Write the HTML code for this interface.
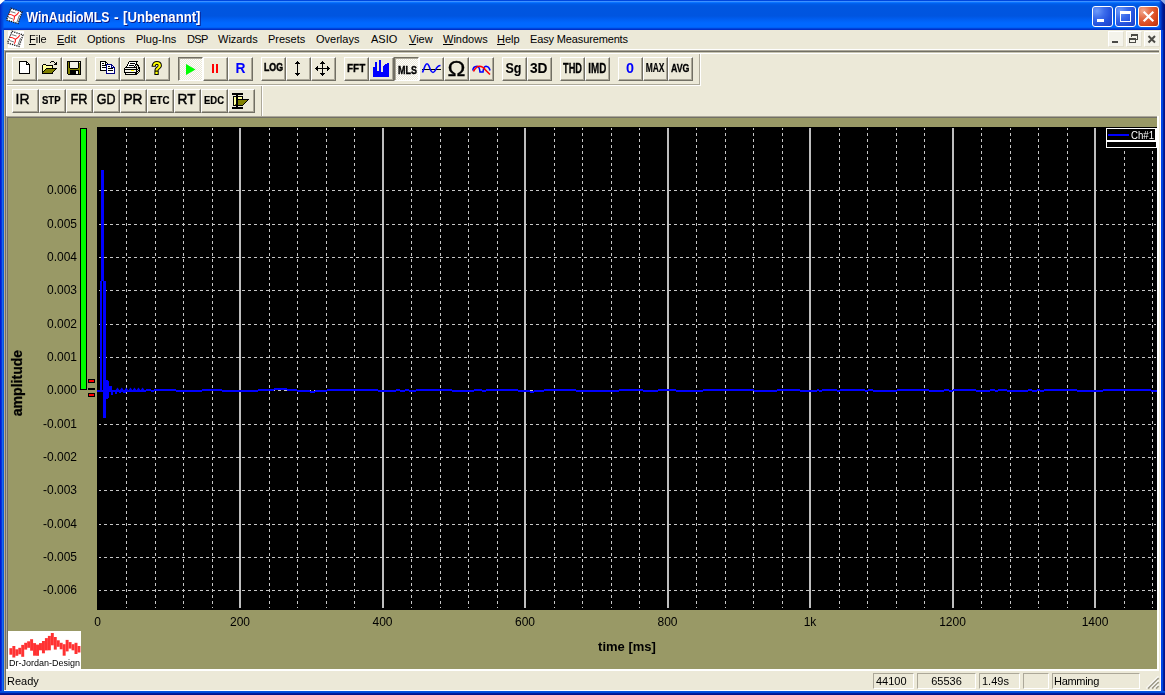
<!DOCTYPE html><html><head><meta charset="utf-8"><title>WinAudioMLS - [Unbenannt]</title><style>
html,body{margin:0;padding:0;}
body{width:1165px;height:695px;overflow:hidden;background:#ECE9D8;position:relative;font-family:"Liberation Sans",sans-serif;font-size:11px;color:#000;}
svg text{font-family:"Liberation Sans",sans-serif;}
.gl{will-change:transform;}
.abs{position:absolute;}
#title{left:0;top:0;width:1165px;height:30px;background:linear-gradient(to bottom,#0046DD 0px,#0046DD 1px,#3C90FF 1px,#3C90FF 2px,#0A72FF 2px,#0A72FF 3px,#0066F4 3px,#005CE8 4px,#0056E0 6px,#0055E0 16px,#0060F4 20px,#0068FF 23px,#0068FF 27px,#0058EC 28px,#0030C8 29px,#0030C8 30px);}
#bl{left:0;top:30px;width:4px;height:665px;background:linear-gradient(to right,#0019CF 0,#0019CF 1px,#0831D9 1px,#0831D9 2px,#166AEE 2px,#166AEE 3px,#0855DD 3px,#0855DD 4px);}
#br{left:1161px;top:30px;width:4px;height:665px;background:linear-gradient(to right,#0044EE 0,#0044EE 1px,#0048D8 1px,#0048D8 2px,#001DA0 2px,#001DA0 3px,#00138C 3px,#00138C 4px);}
#bb{left:0;top:691px;width:1165px;height:4px;background:linear-gradient(to bottom,#0855DD 0,#0855DD 1px,#0048D8 1px,#0048D8 2px,#001DA0 2px,#001DA0 3px,#00138C 3px,#00138C 4px);}
.menu{top:32px;height:14px;line-height:14px;font-size:11px;white-space:nowrap;}
.menu u{text-decoration:underline;}
.hl{position:absolute;height:1px;}
.vl{position:absolute;width:1px;}
.btn{position:absolute;box-sizing:border-box;border:1px solid;border-color:#fff #716F64 #716F64 #fff;background:#ECE9D8;box-shadow:inset -1px -1px 0 #ACA899;}
.btn.dn{border-color:#716F64 #fff #fff #716F64;background:repeating-conic-gradient(#fff 0 25%,#ECE9D8 0 50%) 0 0/2px 2px;box-shadow:inset 1px 1px 0 #ACA899;}
.cb{position:absolute;top:6px;width:21px;height:21px;box-sizing:border-box;border:1px solid #fff;border-radius:3px;}
.cb.b{background:radial-gradient(circle at 4px 4px,#6E9BFA 0,#3C6CEB 35%,#2452DE 65%,#1C3FC4 100%);}
.cb.r{background:radial-gradient(circle at 4px 4px,#F2A98E 0,#E36A44 35%,#DA4A1F 65%,#B52F0D 100%);}
.mb{position:absolute;top:31px;width:16px;height:16px;box-sizing:border-box;background:#F4F3EB;border:1px solid;border-color:#fff #E2DFD0 #E2DFD0 #fff;}
#mdi{left:8px;top:118px;width:1149px;height:551px;background:#999966;}
.pane{position:absolute;top:673px;height:16px;box-sizing:border-box;border:1px solid;border-color:#ACA899 #fff #fff #ACA899;line-height:14px;font-size:11px;white-space:nowrap;}
</style></head><body>
<div id="title" class="abs"></div>
<svg class="abs gl" style="left:0;top:0" width="400" height="30" viewBox="0 0 400 30"><text y="21.6" font-size="14" font-weight="bold" fill="#fff" style="text-shadow:1px 1px 0 #0A1883" xml:space="preserve"><tspan x="26.5" textLength="83" lengthAdjust="spacingAndGlyphs">WinAudioMLS</tspan><tspan x="110.2"> - </tspan><tspan x="123" textLength="77.5" lengthAdjust="spacingAndGlyphs">[Unbenannt]</tspan></text></svg>
<div id="bl" class="abs"></div><div id="br" class="abs"></div><div id="bb" class="abs"></div>
<div class="abs" style="left:0;top:0;width:4px;height:30px;background:linear-gradient(to right,#0024C0 0,#0038D0 1px,#0050E4 3px,rgba(0,80,228,0) 4px)"></div>
<div class="abs" style="left:1159px;top:0;width:6px;height:30px;background:linear-gradient(to right,rgba(0,64,208,0) 0,#0038C8 2px,#0028B0 3px,#001890 4px,#00107C 6px)"></div>
<svg class="abs" style="left:0;top:0" width="1165" height="8" viewBox="0 0 1165 8"><polygon points="0,0 5,0 0,4.5" fill="#fff"/><polygon points="1160.5,0 1165,0 1165,4.5" fill="#8FA8E6"/></svg>
<div class="cb b" style="left:1092px"></div><div class="cb b" style="left:1115px"></div><div class="cb r" style="left:1138px"></div>
<div class="mb" style="left:1108px"></div><div class="mb" style="left:1126px"></div><div class="mb" style="left:1144px"></div>
<div class="abs menu" style="left:29px"><u>F</u>ile</div>
<div class="abs menu" style="left:57px"><u>E</u>dit</div>
<div class="abs menu" style="left:87px">Options</div>
<div class="abs menu" style="left:136px">Plug-Ins</div>
<div class="abs menu" style="left:187px;letter-spacing:-0.6px">DSP</div>
<div class="abs menu" style="left:218px">Wizards</div>
<div class="abs menu" style="left:268px">Presets</div>
<div class="abs menu" style="left:316px">Overlays</div>
<div class="abs menu" style="left:371px">ASIO</div>
<div class="abs menu" style="left:409px"><u>V</u>iew</div>
<div class="abs menu" style="left:443px"><u>W</u>indows</div>
<div class="abs menu" style="left:497px"><u>H</u>elp</div>
<div class="abs menu" style="left:530px;letter-spacing:-0.14px">Easy Measurements</div>
<div class="hl" style="left:4px;top:49px;width:1155px;background:#fff"></div>
<div class="hl" style="left:4px;top:50px;width:1155px;background:#ACA899"></div>
<div class="hl" style="left:4px;top:51px;width:1155px;background:#716F64"></div>
<div class="hl" style="left:4px;top:52px;width:1155px;background:#C8C5B2"></div>
<div class="hl" style="left:4px;top:53px;width:1155px;background:#fff"></div>
<div class="vl" style="left:699px;top:54px;height:31px;background:#ACA899"></div>
<div class="vl" style="left:700px;top:54px;height:32px;background:#fff"></div>
<div class="hl" style="left:6px;top:84px;width:694px;background:#ACA899"></div>
<div class="hl" style="left:6px;top:85px;width:695px;background:#fff"></div>
<div class="vl" style="left:261px;top:86px;height:30px;background:#ACA899"></div>
<div class="vl" style="left:262px;top:86px;height:30px;background:#fff"></div>
<div class="btn" style="left:12px;top:57px;width:25px;height:24px"></div>
<div class="btn" style="left:37px;top:57px;width:25px;height:24px"></div>
<div class="btn" style="left:62px;top:57px;width:25px;height:24px"></div>
<div class="btn" style="left:95px;top:57px;width:25px;height:24px"></div>
<div class="btn" style="left:120px;top:57px;width:25px;height:24px"></div>
<div class="btn" style="left:145px;top:57px;width:25px;height:24px"></div>
<div class="btn dn" style="left:178px;top:57px;width:25px;height:24px"></div>
<div class="btn" style="left:203px;top:57px;width:25px;height:24px"></div>
<div class="btn" style="left:228px;top:57px;width:25px;height:24px"></div>
<div class="btn" style="left:261px;top:57px;width:25px;height:24px"></div>
<div class="btn" style="left:286px;top:57px;width:25px;height:24px"></div>
<div class="btn" style="left:311px;top:57px;width:25px;height:24px"></div>
<div class="btn" style="left:344px;top:57px;width:25px;height:24px"></div>
<div class="btn" style="left:369px;top:57px;width:25px;height:24px"></div>
<div class="btn dn" style="left:394px;top:57px;width:25px;height:24px"></div>
<div class="btn" style="left:419px;top:57px;width:25px;height:24px"></div>
<div class="btn" style="left:444px;top:57px;width:25px;height:24px"></div>
<div class="btn" style="left:469px;top:57px;width:25px;height:24px"></div>
<div class="btn" style="left:502px;top:57px;width:25px;height:24px"></div>
<div class="btn" style="left:527px;top:57px;width:25px;height:24px"></div>
<div class="btn" style="left:560px;top:57px;width:25px;height:24px"></div>
<div class="btn" style="left:585px;top:57px;width:25px;height:24px"></div>
<div class="btn" style="left:618px;top:57px;width:25px;height:24px"></div>
<div class="btn" style="left:643px;top:57px;width:25px;height:24px"></div>
<div class="btn" style="left:668px;top:57px;width:25px;height:24px"></div>
<div class="btn" style="left:12px;top:89px;width:27px;height:24px"></div>
<div class="btn" style="left:39px;top:89px;width:27px;height:24px"></div>
<div class="btn" style="left:66px;top:89px;width:27px;height:24px"></div>
<div class="btn" style="left:93px;top:89px;width:27px;height:24px"></div>
<div class="btn" style="left:120px;top:89px;width:27px;height:24px"></div>
<div class="btn" style="left:147px;top:89px;width:27px;height:24px"></div>
<div class="btn" style="left:174px;top:89px;width:27px;height:24px"></div>
<div class="btn" style="left:201px;top:89px;width:27px;height:24px"></div>
<div class="btn" style="left:228px;top:89px;width:27px;height:24px"></div>
<div class="hl" style="left:6px;top:116px;width:1151px;background:#ACA899"></div>
<div class="hl" style="left:7px;top:117px;width:1150px;background:#716F64"></div>
<div class="vl" style="left:4px;top:51px;height:639px;background:#B5AD94"></div>
<div class="vl" style="left:5px;top:52px;height:638px;background:#716F64"></div>
<div class="vl" style="left:6px;top:53px;height:63px;background:#fff"></div>
<div class="hl" style="left:4px;top:690px;width:1157px;background:#fff"></div>
<div class="vl" style="left:6px;top:116px;height:553px;background:#ACA899"></div>
<div class="vl" style="left:7px;top:117px;height:552px;background:#716F64"></div>
<div class="vl" style="left:1160px;top:30px;height:661px;background:#FBFAF4"></div>
<div id="mdi" class="abs"></div>
<div class="vl" style="left:1157px;top:116px;height:555px;background:#fff"></div>
<div class="vl" style="left:1158px;top:116px;height:555px;background:#fff"></div>
<div class="hl" style="left:6px;top:669px;width:1153px;background:#fff"></div>
<div class="hl" style="left:6px;top:670px;width:1153px;background:#fff"></div>
<div class="abs" style="left:97px;top:127px;width:1060px;height:483px;background:#000"></div>
<div class="abs" style="left:8px;top:631px;width:73px;height:38px;background:#fff"></div>
<svg class="abs gl" style="left:0;top:0" width="1165" height="695" viewBox="0 0 1165 695" shape-rendering="crispEdges"><line x1="126.5" y1="128" x2="126.5" y2="608" stroke="#C6C6C6" stroke-width="1" stroke-dasharray="3 3" stroke-dashoffset="1"/><line x1="155.5" y1="128" x2="155.5" y2="608" stroke="#C6C6C6" stroke-width="1" stroke-dasharray="3 3" stroke-dashoffset="1"/><line x1="183.5" y1="128" x2="183.5" y2="608" stroke="#C6C6C6" stroke-width="1" stroke-dasharray="3 3" stroke-dashoffset="1"/><line x1="212.5" y1="128" x2="212.5" y2="608" stroke="#C6C6C6" stroke-width="1" stroke-dasharray="3 3" stroke-dashoffset="1"/><rect x="239" y="128" width="2" height="480" fill="#BEBEBE"/><line x1="269.5" y1="128" x2="269.5" y2="608" stroke="#C6C6C6" stroke-width="1" stroke-dasharray="3 3" stroke-dashoffset="1"/><line x1="297.5" y1="128" x2="297.5" y2="608" stroke="#C6C6C6" stroke-width="1" stroke-dasharray="3 3" stroke-dashoffset="1"/><line x1="326.5" y1="128" x2="326.5" y2="608" stroke="#C6C6C6" stroke-width="1" stroke-dasharray="3 3" stroke-dashoffset="1"/><line x1="354.5" y1="128" x2="354.5" y2="608" stroke="#C6C6C6" stroke-width="1" stroke-dasharray="3 3" stroke-dashoffset="1"/><rect x="382" y="128" width="2" height="480" fill="#BEBEBE"/><line x1="411.5" y1="128" x2="411.5" y2="608" stroke="#C6C6C6" stroke-width="1" stroke-dasharray="3 3" stroke-dashoffset="1"/><line x1="440.5" y1="128" x2="440.5" y2="608" stroke="#C6C6C6" stroke-width="1" stroke-dasharray="3 3" stroke-dashoffset="1"/><line x1="468.5" y1="128" x2="468.5" y2="608" stroke="#C6C6C6" stroke-width="1" stroke-dasharray="3 3" stroke-dashoffset="1"/><line x1="497.5" y1="128" x2="497.5" y2="608" stroke="#C6C6C6" stroke-width="1" stroke-dasharray="3 3" stroke-dashoffset="1"/><rect x="524" y="128" width="2" height="480" fill="#BEBEBE"/><line x1="554.5" y1="128" x2="554.5" y2="608" stroke="#C6C6C6" stroke-width="1" stroke-dasharray="3 3" stroke-dashoffset="1"/><line x1="582.5" y1="128" x2="582.5" y2="608" stroke="#C6C6C6" stroke-width="1" stroke-dasharray="3 3" stroke-dashoffset="1"/><line x1="611.5" y1="128" x2="611.5" y2="608" stroke="#C6C6C6" stroke-width="1" stroke-dasharray="3 3" stroke-dashoffset="1"/><line x1="639.5" y1="128" x2="639.5" y2="608" stroke="#C6C6C6" stroke-width="1" stroke-dasharray="3 3" stroke-dashoffset="1"/><rect x="667" y="128" width="2" height="480" fill="#BEBEBE"/><line x1="696.5" y1="128" x2="696.5" y2="608" stroke="#C6C6C6" stroke-width="1" stroke-dasharray="3 3" stroke-dashoffset="1"/><line x1="725.5" y1="128" x2="725.5" y2="608" stroke="#C6C6C6" stroke-width="1" stroke-dasharray="3 3" stroke-dashoffset="1"/><line x1="753.5" y1="128" x2="753.5" y2="608" stroke="#C6C6C6" stroke-width="1" stroke-dasharray="3 3" stroke-dashoffset="1"/><line x1="782.5" y1="128" x2="782.5" y2="608" stroke="#C6C6C6" stroke-width="1" stroke-dasharray="3 3" stroke-dashoffset="1"/><rect x="809" y="128" width="2" height="480" fill="#BEBEBE"/><line x1="839.5" y1="128" x2="839.5" y2="608" stroke="#C6C6C6" stroke-width="1" stroke-dasharray="3 3" stroke-dashoffset="1"/><line x1="867.5" y1="128" x2="867.5" y2="608" stroke="#C6C6C6" stroke-width="1" stroke-dasharray="3 3" stroke-dashoffset="1"/><line x1="896.5" y1="128" x2="896.5" y2="608" stroke="#C6C6C6" stroke-width="1" stroke-dasharray="3 3" stroke-dashoffset="1"/><line x1="924.5" y1="128" x2="924.5" y2="608" stroke="#C6C6C6" stroke-width="1" stroke-dasharray="3 3" stroke-dashoffset="1"/><rect x="952" y="128" width="2" height="480" fill="#BEBEBE"/><line x1="981.5" y1="128" x2="981.5" y2="608" stroke="#C6C6C6" stroke-width="1" stroke-dasharray="3 3" stroke-dashoffset="1"/><line x1="1010.5" y1="128" x2="1010.5" y2="608" stroke="#C6C6C6" stroke-width="1" stroke-dasharray="3 3" stroke-dashoffset="1"/><line x1="1038.5" y1="128" x2="1038.5" y2="608" stroke="#C6C6C6" stroke-width="1" stroke-dasharray="3 3" stroke-dashoffset="1"/><line x1="1067.5" y1="128" x2="1067.5" y2="608" stroke="#C6C6C6" stroke-width="1" stroke-dasharray="3 3" stroke-dashoffset="1"/><rect x="1094" y="128" width="2" height="480" fill="#BEBEBE"/><line x1="1124.5" y1="128" x2="1124.5" y2="608" stroke="#C6C6C6" stroke-width="1" stroke-dasharray="3 3" stroke-dashoffset="1"/><line x1="1152.5" y1="128" x2="1152.5" y2="608" stroke="#C6C6C6" stroke-width="1" stroke-dasharray="3 3" stroke-dashoffset="1"/><line x1="99" y1="190.5" x2="1156" y2="190.5" stroke="#C6C6C6" stroke-width="1" stroke-dasharray="3 3" stroke-dashoffset="1"/><text x="77" y="194" text-anchor="end" font-size="12" fill="#000">0.006</text><line x1="99" y1="224.5" x2="1156" y2="224.5" stroke="#C6C6C6" stroke-width="1" stroke-dasharray="3 3" stroke-dashoffset="1"/><text x="77" y="228" text-anchor="end" font-size="12" fill="#000">0.005</text><line x1="99" y1="257.5" x2="1156" y2="257.5" stroke="#C6C6C6" stroke-width="1" stroke-dasharray="3 3" stroke-dashoffset="1"/><text x="77" y="261" text-anchor="end" font-size="12" fill="#000">0.004</text><line x1="99" y1="290.5" x2="1156" y2="290.5" stroke="#C6C6C6" stroke-width="1" stroke-dasharray="3 3" stroke-dashoffset="1"/><text x="77" y="294" text-anchor="end" font-size="12" fill="#000">0.003</text><line x1="99" y1="324.5" x2="1156" y2="324.5" stroke="#C6C6C6" stroke-width="1" stroke-dasharray="3 3" stroke-dashoffset="1"/><text x="77" y="328" text-anchor="end" font-size="12" fill="#000">0.002</text><line x1="99" y1="357.5" x2="1156" y2="357.5" stroke="#C6C6C6" stroke-width="1" stroke-dasharray="3 3" stroke-dashoffset="1"/><text x="77" y="361" text-anchor="end" font-size="12" fill="#000">0.001</text><line x1="99" y1="390.5" x2="1156" y2="390.5" stroke="#C6C6C6" stroke-width="1" stroke-dasharray="3 3" stroke-dashoffset="1"/><text x="77" y="394" text-anchor="end" font-size="12" fill="#000">0.000</text><line x1="99" y1="424.5" x2="1156" y2="424.5" stroke="#C6C6C6" stroke-width="1" stroke-dasharray="3 3" stroke-dashoffset="1"/><text x="77" y="428" text-anchor="end" font-size="12" fill="#000">-0.001</text><line x1="99" y1="457.5" x2="1156" y2="457.5" stroke="#C6C6C6" stroke-width="1" stroke-dasharray="3 3" stroke-dashoffset="1"/><text x="77" y="461" text-anchor="end" font-size="12" fill="#000">-0.002</text><line x1="99" y1="490.5" x2="1156" y2="490.5" stroke="#C6C6C6" stroke-width="1" stroke-dasharray="3 3" stroke-dashoffset="1"/><text x="77" y="494" text-anchor="end" font-size="12" fill="#000">-0.003</text><line x1="99" y1="524.5" x2="1156" y2="524.5" stroke="#C6C6C6" stroke-width="1" stroke-dasharray="3 3" stroke-dashoffset="1"/><text x="77" y="528" text-anchor="end" font-size="12" fill="#000">-0.004</text><line x1="99" y1="557.5" x2="1156" y2="557.5" stroke="#C6C6C6" stroke-width="1" stroke-dasharray="3 3" stroke-dashoffset="1"/><text x="77" y="561" text-anchor="end" font-size="12" fill="#000">-0.005</text><line x1="99" y1="590.5" x2="1156" y2="590.5" stroke="#C6C6C6" stroke-width="1" stroke-dasharray="3 3" stroke-dashoffset="1"/><text x="77" y="594" text-anchor="end" font-size="12" fill="#000">-0.006</text><text x="97.5" y="626" text-anchor="middle" font-size="12" fill="#000">0</text><text x="240.0" y="626" text-anchor="middle" font-size="12" fill="#000">200</text><text x="382.5" y="626" text-anchor="middle" font-size="12" fill="#000">400</text><text x="525.0" y="626" text-anchor="middle" font-size="12" fill="#000">600</text><text x="667.5" y="626" text-anchor="middle" font-size="12" fill="#000">800</text><text x="810.0" y="626" text-anchor="middle" font-size="12" fill="#000">1k</text><text x="952.5" y="626" text-anchor="middle" font-size="12" fill="#000">1200</text><text x="1095.0" y="626" text-anchor="middle" font-size="12" fill="#000">1400</text><text x="627" y="650.5" text-anchor="middle" font-size="13" font-weight="bold" fill="#000">time [ms]</text><text transform="translate(22.3 416.3) rotate(-90)" font-size="14" font-weight="bold" fill="#000" stroke="#000" stroke-width="0.25" textLength="66.5" lengthAdjust="spacingAndGlyphs">amplitude</text><rect x="80.5" y="128.5" width="6" height="261" fill="#00FF00" stroke="#000" stroke-width="1"/><rect x="88.5" y="379.5" width="6" height="3" fill="#FF0000" stroke="#000" stroke-width="1"/><rect x="88.5" y="393.5" width="6" height="3" fill="#FF0000" stroke="#000" stroke-width="1"/><rect x="88" y="388" width="7" height="2" fill="#000"/><rect x="97" y="390" width="49" height="2" fill="#0000FF"/><rect x="146" y="389" width="5" height="2" fill="#0000FF"/><rect x="151" y="390" width="3" height="2" fill="#0000FF"/><rect x="154" y="389" width="22" height="2" fill="#0000FF"/><rect x="176" y="390" width="26" height="2" fill="#0000FF"/><rect x="202" y="389" width="20" height="2" fill="#0000FF"/><rect x="222" y="390" width="36" height="2" fill="#0000FF"/><rect x="258" y="389" width="16" height="2" fill="#0000FF"/><rect x="274" y="388" width="13" height="2" fill="#0000FF"/><rect x="287" y="389" width="10" height="2" fill="#0000FF"/><rect x="297" y="390" width="13" height="2" fill="#0000FF"/><rect x="310" y="391" width="5" height="2" fill="#0000FF"/><rect x="315" y="390" width="12" height="2" fill="#0000FF"/><rect x="327" y="389" width="51" height="2" fill="#0000FF"/><rect x="378" y="390" width="18" height="2" fill="#0000FF"/><rect x="396" y="389" width="4" height="2" fill="#0000FF"/><rect x="400" y="390" width="5" height="2" fill="#0000FF"/><rect x="405" y="389" width="4" height="2" fill="#0000FF"/><rect x="409" y="390" width="7" height="2" fill="#0000FF"/><rect x="416" y="389" width="36" height="2" fill="#0000FF"/><rect x="452" y="390" width="22" height="2" fill="#0000FF"/><rect x="474" y="389" width="8" height="2" fill="#0000FF"/><rect x="482" y="390" width="4" height="2" fill="#0000FF"/><rect x="486" y="389" width="32" height="2" fill="#0000FF"/><rect x="518" y="390" width="12" height="2" fill="#0000FF"/><rect x="530" y="391" width="4" height="2" fill="#0000FF"/><rect x="534" y="390" width="10" height="2" fill="#0000FF"/><rect x="544" y="389" width="32" height="2" fill="#0000FF"/><rect x="576" y="390" width="43" height="2" fill="#0000FF"/><rect x="619" y="389" width="24" height="2" fill="#0000FF"/><rect x="643" y="390" width="15" height="2" fill="#0000FF"/><rect x="658" y="389" width="18" height="2" fill="#0000FF"/><rect x="676" y="390" width="27" height="2" fill="#0000FF"/><rect x="703" y="389" width="51" height="2" fill="#0000FF"/><rect x="754" y="390" width="23" height="2" fill="#0000FF"/><rect x="777" y="389" width="23" height="2" fill="#0000FF"/><rect x="800" y="390" width="17" height="2" fill="#0000FF"/><rect x="817" y="389" width="2" height="2" fill="#0000FF"/><rect x="819" y="390" width="3" height="2" fill="#0000FF"/><rect x="822" y="389" width="15" height="2" fill="#0000FF"/><rect x="837" y="390" width="3" height="2" fill="#0000FF"/><rect x="840" y="389" width="25" height="2" fill="#0000FF"/><rect x="865" y="390" width="3" height="2" fill="#0000FF"/><rect x="868" y="389" width="5" height="2" fill="#0000FF"/><rect x="873" y="390" width="24" height="2" fill="#0000FF"/><rect x="897" y="389" width="32" height="2" fill="#0000FF"/><rect x="929" y="390" width="15" height="2" fill="#0000FF"/><rect x="944" y="389" width="5" height="2" fill="#0000FF"/><rect x="949" y="390" width="4" height="2" fill="#0000FF"/><rect x="953" y="389" width="23" height="2" fill="#0000FF"/><rect x="976" y="390" width="14" height="2" fill="#0000FF"/><rect x="990" y="389" width="5" height="2" fill="#0000FF"/><rect x="995" y="390" width="3" height="2" fill="#0000FF"/><rect x="998" y="389" width="9" height="2" fill="#0000FF"/><rect x="1007" y="390" width="21" height="2" fill="#0000FF"/><rect x="1028" y="389" width="4" height="2" fill="#0000FF"/><rect x="1032" y="390" width="5" height="2" fill="#0000FF"/><rect x="1037" y="389" width="3" height="2" fill="#0000FF"/><rect x="1040" y="390" width="4" height="2" fill="#0000FF"/><rect x="1044" y="389" width="33" height="2" fill="#0000FF"/><rect x="1077" y="390" width="26" height="2" fill="#0000FF"/><rect x="1103" y="389" width="48" height="2" fill="#0000FF"/><rect x="1151" y="390" width="6" height="2" fill="#0000FF"/><rect x="101" y="170" width="3" height="111" fill="#0000FF"/><rect x="100" y="281" width="2" height="110" fill="#0000FF"/><rect x="103" y="281" width="3" height="137" fill="#0000FF"/><rect x="105" y="380" width="3" height="19" fill="#0000FF"/><rect x="108" y="381" width="1" height="17" fill="#0000FF"/><rect x="109" y="386" width="3" height="6" fill="#0000FF"/><rect x="111" y="391" width="2" height="4" fill="#0000FF"/><rect x="115" y="391" width="2" height="3" fill="#0000FF"/><rect x="119" y="391" width="2" height="2" fill="#0000FF"/><rect x="123" y="391" width="3" height="2" fill="#0000FF"/><polygon points="115.3,390.5 117.5,387.6 119.7,390.5" fill="#0000FF" shape-rendering="geometricPrecision"/><polygon points="119.6,390.5 121.8,387.6 124.0,390.5" fill="#0000FF" shape-rendering="geometricPrecision"/><polygon points="124.1,390.5 126.3,387.6 128.5,390.5" fill="#0000FF" shape-rendering="geometricPrecision"/><polygon points="128.3,390.5 130.5,387.6 132.7,390.5" fill="#0000FF" shape-rendering="geometricPrecision"/><polygon points="132.3,390.5 134.5,387.6 136.7,390.5" fill="#0000FF" shape-rendering="geometricPrecision"/><polygon points="136.3,390.5 138.5,387.6 140.7,390.5" fill="#0000FF" shape-rendering="geometricPrecision"/><polygon points="140.4,390.5 142.6,387.6 144.79999999999998,390.5" fill="#0000FF" shape-rendering="geometricPrecision"/><rect x="1106" y="128" width="51" height="20" fill="#fff"/><rect x="1107" y="129" width="48" height="11" fill="#000"/><rect x="1107" y="142" width="49" height="5" fill="#000"/><rect x="1108" y="134" width="21" height="2" fill="#0000FF"/><text x="1131" y="139" font-size="11" fill="#fff" textLength="23" lengthAdjust="spacingAndGlyphs">Ch#1</text><g transform="translate(0 0)" shape-rendering="geometricPrecision"><polygon points="11,8.3 22,12 18,23.5 6.5,20" fill="#fff" stroke="#1a1a1a" stroke-width="1.3" stroke-dasharray="1.3 1"/><path d="M10.5 11.5 L15.5 13 M8.5 17.5 L13 19 M19.5 15 L17 22" stroke="#555" stroke-width="0.8" fill="none"/><path d="M8.8 14.2 Q12 14.4 14.5 16.3 Q17 15 18.8 12.2 M14.5 16.3 Q14.6 19 13.2 20.8" stroke="#FF1010" stroke-width="1.05" fill="none"/></g><rect x="8" y="31" width="16" height="17" fill="#fff"/><g transform="translate(1 23)" shape-rendering="geometricPrecision"><polygon points="11,8.3 22,12 18,23.5 6.5,20" fill="#fff" stroke="#1a1a1a" stroke-width="1.3" stroke-dasharray="1.3 1"/><path d="M10.5 11.5 L15.5 13 M8.5 17.5 L13 19 M19.5 15 L17 22" stroke="#555" stroke-width="0.8" fill="none"/><path d="M8.8 14.2 Q12 14.4 14.5 16.3 Q17 15 18.8 12.2 M14.5 16.3 Q14.6 19 13.2 20.8" stroke="#FF1010" stroke-width="1.05" fill="none"/></g><rect x="19" y="61" width="8" height="1" fill="#000"/><rect x="19" y="62" width="1" height="1" fill="#000"/><rect x="20" y="62" width="6" height="1" fill="#fff"/><rect x="26" y="62" width="2" height="1" fill="#000"/><rect x="19" y="63" width="1" height="1" fill="#000"/><rect x="20" y="63" width="6" height="1" fill="#fff"/><rect x="26" y="63" width="1" height="1" fill="#000"/><rect x="27" y="63" width="1" height="1" fill="#fff"/><rect x="28" y="63" width="1" height="1" fill="#000"/><rect x="19" y="64" width="1" height="1" fill="#000"/><rect x="20" y="64" width="6" height="1" fill="#fff"/><rect x="26" y="64" width="4" height="1" fill="#000"/><rect x="19" y="65" width="1" height="1" fill="#000"/><rect x="20" y="65" width="9" height="1" fill="#fff"/><rect x="29" y="65" width="1" height="1" fill="#000"/><rect x="19" y="66" width="1" height="1" fill="#000"/><rect x="20" y="66" width="9" height="1" fill="#fff"/><rect x="29" y="66" width="1" height="1" fill="#000"/><rect x="19" y="67" width="1" height="1" fill="#000"/><rect x="20" y="67" width="9" height="1" fill="#fff"/><rect x="29" y="67" width="1" height="1" fill="#000"/><rect x="19" y="68" width="1" height="1" fill="#000"/><rect x="20" y="68" width="9" height="1" fill="#fff"/><rect x="29" y="68" width="1" height="1" fill="#000"/><rect x="19" y="69" width="1" height="1" fill="#000"/><rect x="20" y="69" width="9" height="1" fill="#fff"/><rect x="29" y="69" width="1" height="1" fill="#000"/><rect x="19" y="70" width="1" height="1" fill="#000"/><rect x="20" y="70" width="9" height="1" fill="#fff"/><rect x="29" y="70" width="1" height="1" fill="#000"/><rect x="19" y="71" width="1" height="1" fill="#000"/><rect x="20" y="71" width="9" height="1" fill="#fff"/><rect x="29" y="71" width="1" height="1" fill="#000"/><rect x="19" y="72" width="1" height="1" fill="#000"/><rect x="20" y="72" width="9" height="1" fill="#fff"/><rect x="29" y="72" width="1" height="1" fill="#000"/><rect x="19" y="73" width="11" height="1" fill="#000"/><rect x="51" y="61" width="3" height="1" fill="#000"/><rect x="50" y="62" width="1" height="1" fill="#000"/><rect x="54" y="62" width="1" height="1" fill="#000"/><rect x="56" y="62" width="1" height="1" fill="#000"/><rect x="55" y="63" width="2" height="1" fill="#000"/><rect x="43" y="64" width="3" height="1" fill="#000"/><rect x="54" y="64" width="3" height="1" fill="#000"/><rect x="42" y="65" width="1" height="1" fill="#000"/><rect x="43" y="65" width="3" height="1" fill="#FFFF99"/><rect x="46" y="65" width="7" height="1" fill="#000"/><rect x="42" y="66" width="1" height="1" fill="#000"/><rect x="43" y="66" width="9" height="1" fill="#FFFF99"/><rect x="52" y="66" width="1" height="1" fill="#000"/><rect x="42" y="67" width="1" height="1" fill="#000"/><rect x="43" y="67" width="9" height="1" fill="#FFFF99"/><rect x="52" y="67" width="1" height="1" fill="#000"/><rect x="42" y="68" width="1" height="1" fill="#000"/><rect x="43" y="68" width="3" height="1" fill="#FFFF99"/><rect x="46" y="68" width="11" height="1" fill="#000"/><rect x="42" y="69" width="1" height="1" fill="#000"/><rect x="43" y="69" width="2" height="1" fill="#FFFF99"/><rect x="45" y="69" width="1" height="1" fill="#000"/><rect x="46" y="69" width="9" height="1" fill="#808000"/><rect x="55" y="69" width="1" height="1" fill="#000"/><rect x="42" y="70" width="1" height="1" fill="#000"/><rect x="43" y="70" width="1" height="1" fill="#FFFF99"/><rect x="44" y="70" width="1" height="1" fill="#000"/><rect x="45" y="70" width="9" height="1" fill="#808000"/><rect x="54" y="70" width="1" height="1" fill="#000"/><rect x="42" y="71" width="2" height="1" fill="#000"/><rect x="44" y="71" width="9" height="1" fill="#808000"/><rect x="53" y="71" width="1" height="1" fill="#000"/><rect x="42" y="72" width="1" height="1" fill="#000"/><rect x="43" y="72" width="9" height="1" fill="#808000"/><rect x="52" y="72" width="1" height="1" fill="#000"/><rect x="42" y="73" width="11" height="1" fill="#000"/><rect x="67" y="61" width="14" height="1" fill="#000"/><rect x="67" y="62" width="1" height="1" fill="#000"/><rect x="68" y="62" width="1" height="1" fill="#808000"/><rect x="69" y="62" width="1" height="1" fill="#000"/><rect x="70" y="62" width="8" height="1" fill="#F4F2E8"/><rect x="78" y="62" width="1" height="1" fill="#000"/><rect x="79" y="62" width="1" height="1" fill="#F4F2E8"/><rect x="80" y="62" width="1" height="1" fill="#000"/><rect x="67" y="63" width="1" height="1" fill="#000"/><rect x="68" y="63" width="1" height="1" fill="#808000"/><rect x="69" y="63" width="1" height="1" fill="#000"/><rect x="70" y="63" width="8" height="1" fill="#F4F2E8"/><rect x="78" y="63" width="1" height="1" fill="#000"/><rect x="79" y="63" width="1" height="1" fill="#808000"/><rect x="80" y="63" width="1" height="1" fill="#000"/><rect x="67" y="64" width="1" height="1" fill="#000"/><rect x="68" y="64" width="1" height="1" fill="#808000"/><rect x="69" y="64" width="1" height="1" fill="#000"/><rect x="70" y="64" width="8" height="1" fill="#F4F2E8"/><rect x="78" y="64" width="1" height="1" fill="#000"/><rect x="79" y="64" width="1" height="1" fill="#808000"/><rect x="80" y="64" width="1" height="1" fill="#000"/><rect x="67" y="65" width="1" height="1" fill="#000"/><rect x="68" y="65" width="1" height="1" fill="#808000"/><rect x="69" y="65" width="1" height="1" fill="#000"/><rect x="70" y="65" width="8" height="1" fill="#F4F2E8"/><rect x="78" y="65" width="1" height="1" fill="#000"/><rect x="79" y="65" width="1" height="1" fill="#808000"/><rect x="80" y="65" width="1" height="1" fill="#000"/><rect x="67" y="66" width="1" height="1" fill="#000"/><rect x="68" y="66" width="1" height="1" fill="#808000"/><rect x="69" y="66" width="1" height="1" fill="#000"/><rect x="70" y="66" width="8" height="1" fill="#F4F2E8"/><rect x="78" y="66" width="1" height="1" fill="#000"/><rect x="79" y="66" width="1" height="1" fill="#808000"/><rect x="80" y="66" width="1" height="1" fill="#000"/><rect x="67" y="67" width="1" height="1" fill="#000"/><rect x="68" y="67" width="1" height="1" fill="#808000"/><rect x="69" y="67" width="1" height="1" fill="#000"/><rect x="70" y="67" width="8" height="1" fill="#F4F2E8"/><rect x="78" y="67" width="1" height="1" fill="#000"/><rect x="79" y="67" width="1" height="1" fill="#808000"/><rect x="80" y="67" width="1" height="1" fill="#000"/><rect x="67" y="68" width="1" height="1" fill="#000"/><rect x="68" y="68" width="2" height="1" fill="#808000"/><rect x="70" y="68" width="8" height="1" fill="#000"/><rect x="78" y="68" width="2" height="1" fill="#808000"/><rect x="80" y="68" width="1" height="1" fill="#000"/><rect x="67" y="69" width="1" height="1" fill="#000"/><rect x="68" y="69" width="12" height="1" fill="#808000"/><rect x="80" y="69" width="1" height="1" fill="#000"/><rect x="67" y="70" width="1" height="1" fill="#000"/><rect x="68" y="70" width="2" height="1" fill="#808000"/><rect x="70" y="70" width="9" height="1" fill="#000"/><rect x="79" y="70" width="1" height="1" fill="#808000"/><rect x="80" y="70" width="1" height="1" fill="#000"/><rect x="67" y="71" width="1" height="1" fill="#000"/><rect x="68" y="71" width="2" height="1" fill="#808000"/><rect x="70" y="71" width="6" height="1" fill="#000"/><rect x="76" y="71" width="2" height="1" fill="#F4F2E8"/><rect x="78" y="71" width="1" height="1" fill="#000"/><rect x="79" y="71" width="1" height="1" fill="#808000"/><rect x="80" y="71" width="1" height="1" fill="#000"/><rect x="67" y="72" width="1" height="1" fill="#000"/><rect x="68" y="72" width="2" height="1" fill="#808000"/><rect x="70" y="72" width="6" height="1" fill="#000"/><rect x="76" y="72" width="2" height="1" fill="#F4F2E8"/><rect x="78" y="72" width="1" height="1" fill="#000"/><rect x="79" y="72" width="1" height="1" fill="#808000"/><rect x="80" y="72" width="1" height="1" fill="#000"/><rect x="67" y="73" width="1" height="1" fill="#000"/><rect x="68" y="73" width="2" height="1" fill="#808000"/><rect x="70" y="73" width="6" height="1" fill="#000"/><rect x="76" y="73" width="2" height="1" fill="#F4F2E8"/><rect x="78" y="73" width="1" height="1" fill="#000"/><rect x="79" y="73" width="1" height="1" fill="#808000"/><rect x="80" y="73" width="1" height="1" fill="#000"/><rect x="68" y="74" width="13" height="1" fill="#000"/><rect x="100" y="61" width="6" height="1" fill="#000"/><rect x="100" y="62" width="1" height="1" fill="#000"/><rect x="101" y="62" width="4" height="1" fill="#fff"/><rect x="105" y="62" width="2" height="1" fill="#000"/><rect x="100" y="63" width="1" height="1" fill="#000"/><rect x="101" y="63" width="1" height="1" fill="#fff"/><rect x="102" y="63" width="2" height="1" fill="#000"/><rect x="104" y="63" width="1" height="1" fill="#fff"/><rect x="105" y="63" width="1" height="1" fill="#000"/><rect x="106" y="63" width="1" height="1" fill="#fff"/><rect x="107" y="63" width="1" height="1" fill="#000"/><rect x="100" y="64" width="1" height="1" fill="#000"/><rect x="101" y="64" width="4" height="1" fill="#fff"/><rect x="105" y="64" width="1" height="1" fill="#000"/><rect x="106" y="64" width="6" height="1" fill="#000080"/><rect x="100" y="65" width="1" height="1" fill="#000"/><rect x="101" y="65" width="1" height="1" fill="#fff"/><rect x="102" y="65" width="4" height="1" fill="#000"/><rect x="106" y="65" width="1" height="1" fill="#000080"/><rect x="107" y="65" width="4" height="1" fill="#fff"/><rect x="111" y="65" width="2" height="1" fill="#000080"/><rect x="100" y="66" width="1" height="1" fill="#000"/><rect x="101" y="66" width="5" height="1" fill="#fff"/><rect x="106" y="66" width="1" height="1" fill="#000080"/><rect x="107" y="66" width="1" height="1" fill="#fff"/><rect x="108" y="66" width="2" height="1" fill="#000"/><rect x="110" y="66" width="1" height="1" fill="#fff"/><rect x="111" y="66" width="1" height="1" fill="#000080"/><rect x="112" y="66" width="1" height="1" fill="#fff"/><rect x="113" y="66" width="1" height="1" fill="#000080"/><rect x="100" y="67" width="1" height="1" fill="#000"/><rect x="101" y="67" width="1" height="1" fill="#fff"/><rect x="102" y="67" width="4" height="1" fill="#000"/><rect x="106" y="67" width="1" height="1" fill="#000080"/><rect x="107" y="67" width="4" height="1" fill="#fff"/><rect x="111" y="67" width="4" height="1" fill="#000080"/><rect x="100" y="68" width="1" height="1" fill="#000"/><rect x="101" y="68" width="5" height="1" fill="#fff"/><rect x="106" y="68" width="1" height="1" fill="#000080"/><rect x="107" y="68" width="1" height="1" fill="#fff"/><rect x="108" y="68" width="5" height="1" fill="#000"/><rect x="113" y="68" width="1" height="1" fill="#fff"/><rect x="114" y="68" width="1" height="1" fill="#000080"/><rect x="100" y="69" width="1" height="1" fill="#000"/><rect x="101" y="69" width="5" height="1" fill="#fff"/><rect x="106" y="69" width="1" height="1" fill="#000080"/><rect x="107" y="69" width="7" height="1" fill="#fff"/><rect x="114" y="69" width="1" height="1" fill="#000080"/><rect x="100" y="70" width="6" height="1" fill="#000"/><rect x="106" y="70" width="1" height="1" fill="#000080"/><rect x="107" y="70" width="1" height="1" fill="#fff"/><rect x="108" y="70" width="5" height="1" fill="#000"/><rect x="113" y="70" width="1" height="1" fill="#fff"/><rect x="114" y="70" width="1" height="1" fill="#000080"/><rect x="106" y="71" width="1" height="1" fill="#000080"/><rect x="107" y="71" width="7" height="1" fill="#fff"/><rect x="114" y="71" width="1" height="1" fill="#000080"/><rect x="106" y="72" width="1" height="1" fill="#000080"/><rect x="107" y="72" width="7" height="1" fill="#fff"/><rect x="114" y="72" width="1" height="1" fill="#000080"/><rect x="106" y="73" width="9" height="1" fill="#000080"/><rect x="129" y="61" width="9" height="1" fill="#000"/><rect x="128" y="62" width="1" height="1" fill="#000"/><rect x="129" y="62" width="7" height="1" fill="#fff"/><rect x="136" y="62" width="1" height="1" fill="#000"/><rect x="128" y="63" width="1" height="1" fill="#000"/><rect x="129" y="63" width="1" height="1" fill="#fff"/><rect x="130" y="63" width="5" height="1" fill="#000"/><rect x="135" y="63" width="1" height="1" fill="#fff"/><rect x="136" y="63" width="1" height="1" fill="#000"/><rect x="127" y="64" width="1" height="1" fill="#000"/><rect x="128" y="64" width="7" height="1" fill="#fff"/><rect x="135" y="64" width="3" height="1" fill="#000"/><rect x="127" y="65" width="1" height="1" fill="#000"/><rect x="128" y="65" width="1" height="1" fill="#fff"/><rect x="129" y="65" width="5" height="1" fill="#000"/><rect x="134" y="65" width="1" height="1" fill="#fff"/><rect x="135" y="65" width="1" height="1" fill="#000"/><rect x="137" y="65" width="2" height="1" fill="#000"/><rect x="126" y="66" width="1" height="1" fill="#000"/><rect x="127" y="66" width="7" height="1" fill="#fff"/><rect x="134" y="66" width="1" height="1" fill="#000"/><rect x="136" y="66" width="1" height="1" fill="#000"/><rect x="138" y="66" width="1" height="1" fill="#000"/><rect x="125" y="67" width="12" height="1" fill="#000"/><rect x="138" y="67" width="2" height="1" fill="#000"/><rect x="124" y="68" width="1" height="1" fill="#000"/><rect x="125" y="68" width="11" height="1" fill="#F4F2E8"/><rect x="136" y="68" width="1" height="1" fill="#000"/><rect x="138" y="68" width="2" height="1" fill="#000"/><rect x="124" y="69" width="14" height="1" fill="#000"/><rect x="139" y="69" width="1" height="1" fill="#000"/><rect x="124" y="70" width="1" height="1" fill="#000"/><rect x="125" y="70" width="6" height="1" fill="#F4F2E8"/><rect x="131" y="70" width="3" height="1" fill="#FFFF00"/><rect x="134" y="70" width="2" height="1" fill="#F4F2E8"/><rect x="136" y="70" width="1" height="1" fill="#000"/><rect x="138" y="70" width="2" height="1" fill="#000"/><rect x="124" y="71" width="1" height="1" fill="#000"/><rect x="125" y="71" width="11" height="1" fill="#F4F2E8"/><rect x="136" y="71" width="2" height="1" fill="#000"/><rect x="139" y="71" width="1" height="1" fill="#000"/><rect x="124" y="72" width="13" height="1" fill="#000"/><rect x="138" y="72" width="1" height="1" fill="#000"/><rect x="125" y="73" width="1" height="1" fill="#000"/><rect x="126" y="73" width="9" height="1" fill="#F4F2E8"/><rect x="135" y="73" width="3" height="1" fill="#000"/><rect x="125" y="74" width="12" height="1" fill="#000"/><rect x="212" y="64" width="2" height="9" fill="#FF0000"/><rect x="216" y="64" width="2" height="9" fill="#FF0000"/><polygon points="186,64 186,75 195.5,69.5" fill="#00FF00" shape-rendering="geometricPrecision"/><rect x="297" y="61" width="1" height="15" fill="#000"/><rect x="297" y="61" width="1" height="1" fill="#000"/><rect x="297" y="75" width="1" height="1" fill="#000"/><rect x="296" y="62" width="3" height="1" fill="#000"/><rect x="296" y="74" width="3" height="1" fill="#000"/><rect x="295" y="63" width="5" height="1" fill="#000"/><rect x="295" y="73" width="5" height="1" fill="#000"/><rect x="322" y="61" width="1" height="15" fill="#000"/><rect x="322" y="61" width="1" height="1" fill="#000"/><rect x="322" y="75" width="1" height="1" fill="#000"/><rect x="321" y="62" width="3" height="1" fill="#000"/><rect x="321" y="74" width="3" height="1" fill="#000"/><rect x="320" y="63" width="5" height="1" fill="#000"/><rect x="320" y="73" width="5" height="1" fill="#000"/><rect x="315" y="68" width="15" height="1" fill="#000"/><rect x="315" y="68" width="1" height="1" fill="#000"/><rect x="329" y="68" width="1" height="1" fill="#000"/><rect x="316" y="67" width="1" height="3" fill="#000"/><rect x="328" y="67" width="1" height="3" fill="#000"/><rect x="317" y="66" width="1" height="5" fill="#000"/><rect x="327" y="66" width="1" height="5" fill="#000"/><rect x="373" y="67" width="1" height="10" fill="#0000FF"/><rect x="374" y="67" width="1" height="10" fill="#0000FF"/><rect x="375" y="62" width="1" height="15" fill="#0000FF"/><rect x="376" y="62" width="1" height="15" fill="#0000FF"/><rect x="377" y="71" width="1" height="6" fill="#0000FF"/><rect x="378" y="71" width="1" height="6" fill="#0000FF"/><rect x="379" y="60" width="1" height="17" fill="#0000FF"/><rect x="380" y="60" width="1" height="17" fill="#0000FF"/><rect x="381" y="72" width="1" height="5" fill="#0000FF"/><rect x="382" y="72" width="1" height="5" fill="#0000FF"/><rect x="383" y="66" width="1" height="11" fill="#0000FF"/><rect x="384" y="65" width="1" height="12" fill="#0000FF"/><rect x="385" y="64" width="1" height="13" fill="#0000FF"/><rect x="386" y="64" width="1" height="13" fill="#0000FF"/><rect x="387" y="63" width="1" height="14" fill="#0000FF"/><rect x="388" y="63" width="1" height="14" fill="#0000FF"/><rect x="422" y="69" width="19" height="1" fill="#000"/><path d="M422.5 72.5 L425 66 Q427 61.5 429 66 L430.5 70 Q433 75 435.5 70 Q437.5 65.5 440.5 65.5" fill="none" stroke="#0000FF" stroke-width="1.6" shape-rendering="geometricPrecision"/><path d="M472.8 70.5 Q473 66.5 477 66.3 Q479.5 66.5 480 72 L483 72 Q483.5 66.5 486 66.3 Q489 66.5 490 70.5" fill="none" stroke="#0000FF" stroke-width="1.6" shape-rendering="geometricPrecision"/><path d="M473.5 71.5 Q476 66.3 479.5 66.3 Q483 66.3 485 69.5 L490 74.5" fill="none" stroke="#FF0000" stroke-width="1.6" shape-rendering="geometricPrecision"/><rect x="232" y="93" width="11" height="1" fill="#000"/><rect x="232" y="94" width="11" height="1" fill="#000"/><rect x="236" y="95" width="2" height="1" fill="#000"/><rect x="233" y="96" width="10" height="1" fill="#000"/><rect x="233" y="97" width="1" height="1" fill="#000"/><rect x="234" y="97" width="2" height="1" fill="#FFFF99"/><rect x="236" y="97" width="2" height="1" fill="#000"/><rect x="238" y="97" width="4" height="1" fill="#FFFF99"/><rect x="242" y="97" width="1" height="1" fill="#000"/><rect x="233" y="98" width="1" height="1" fill="#000"/><rect x="234" y="98" width="2" height="1" fill="#FFFF99"/><rect x="236" y="98" width="2" height="1" fill="#000"/><rect x="238" y="98" width="4" height="1" fill="#FFFF99"/><rect x="242" y="98" width="1" height="1" fill="#000"/><rect x="233" y="99" width="1" height="1" fill="#000"/><rect x="234" y="99" width="2" height="1" fill="#FFFF99"/><rect x="236" y="99" width="13" height="1" fill="#000"/><rect x="233" y="100" width="1" height="1" fill="#000"/><rect x="234" y="100" width="2" height="1" fill="#FFFF99"/><rect x="236" y="100" width="2" height="1" fill="#000"/><rect x="238" y="100" width="9" height="1" fill="#808000"/><rect x="247" y="100" width="1" height="1" fill="#000"/><rect x="233" y="101" width="1" height="1" fill="#000"/><rect x="234" y="101" width="2" height="1" fill="#FFFF99"/><rect x="236" y="101" width="2" height="1" fill="#000"/><rect x="238" y="101" width="8" height="1" fill="#808000"/><rect x="246" y="101" width="1" height="1" fill="#000"/><rect x="233" y="102" width="1" height="1" fill="#000"/><rect x="234" y="102" width="2" height="1" fill="#FFFF99"/><rect x="236" y="102" width="2" height="1" fill="#000"/><rect x="238" y="102" width="7" height="1" fill="#808000"/><rect x="245" y="102" width="1" height="1" fill="#000"/><rect x="233" y="103" width="1" height="1" fill="#000"/><rect x="234" y="103" width="2" height="1" fill="#FFFF99"/><rect x="236" y="103" width="2" height="1" fill="#000"/><rect x="238" y="103" width="6" height="1" fill="#808000"/><rect x="244" y="103" width="1" height="1" fill="#000"/><rect x="233" y="104" width="1" height="1" fill="#000"/><rect x="234" y="104" width="1" height="1" fill="#FFFF99"/><rect x="235" y="104" width="1" height="1" fill="#808000"/><rect x="236" y="104" width="2" height="1" fill="#000"/><rect x="238" y="104" width="5" height="1" fill="#808000"/><rect x="243" y="104" width="1" height="1" fill="#000"/><rect x="233" y="105" width="10" height="1" fill="#000"/><rect x="236" y="106" width="2" height="1" fill="#000"/><rect x="232" y="107" width="11" height="1" fill="#000"/><rect x="232" y="108" width="11" height="1" fill="#000"/><rect x="9.40" y="648.2" width="2.96" height="6.5" fill="#FF3232" shape-rendering="geometricPrecision"/><rect x="12.36" y="646.0" width="2.96" height="11.5" fill="#FF3232" shape-rendering="geometricPrecision"/><rect x="15.32" y="649.3" width="2.96" height="6.5" fill="#FF3232" shape-rendering="geometricPrecision"/><rect x="18.28" y="647.8" width="2.96" height="6.5" fill="#FF3232" shape-rendering="geometricPrecision"/><rect x="21.24" y="644.9" width="2.96" height="11.9" fill="#FF3232" shape-rendering="geometricPrecision"/><rect x="24.20" y="642.8" width="2.96" height="6.8" fill="#FF3232" shape-rendering="geometricPrecision"/><rect x="27.16" y="641.3" width="2.96" height="6.5" fill="#FF3232" shape-rendering="geometricPrecision"/><rect x="30.12" y="639.2" width="2.96" height="11.5" fill="#FF3232" shape-rendering="geometricPrecision"/><rect x="33.08" y="643.1" width="2.96" height="12.6" fill="#FF3232" shape-rendering="geometricPrecision"/><rect x="36.04" y="644.6" width="2.96" height="11.2" fill="#FF3232" shape-rendering="geometricPrecision"/><rect x="39.00" y="643.1" width="2.96" height="7.2" fill="#FF3232" shape-rendering="geometricPrecision"/><rect x="41.96" y="641.0" width="2.96" height="12.3" fill="#FF3232" shape-rendering="geometricPrecision"/><rect x="44.92" y="638.1" width="2.96" height="12.3" fill="#FF3232" shape-rendering="geometricPrecision"/><rect x="47.88" y="635.9" width="2.96" height="14.4" fill="#FF3232" shape-rendering="geometricPrecision"/><rect x="50.84" y="633.0" width="2.96" height="12.3" fill="#FF3232" shape-rendering="geometricPrecision"/><rect x="53.80" y="637.0" width="2.96" height="12.6" fill="#FF3232" shape-rendering="geometricPrecision"/><rect x="56.76" y="640.3" width="2.96" height="6.5" fill="#FF3232" shape-rendering="geometricPrecision"/><rect x="59.72" y="642.8" width="2.96" height="6.5" fill="#FF3232" shape-rendering="geometricPrecision"/><rect x="62.68" y="644.2" width="2.96" height="11.5" fill="#FF3232" shape-rendering="geometricPrecision"/><rect x="65.64" y="639.9" width="2.96" height="11.5" fill="#FF3232" shape-rendering="geometricPrecision"/><rect x="68.60" y="642.1" width="2.96" height="6.5" fill="#FF3232" shape-rendering="geometricPrecision"/><rect x="71.56" y="644.2" width="2.96" height="6.1" fill="#FF3232" shape-rendering="geometricPrecision"/><rect x="74.52" y="642.8" width="2.96" height="11.2" fill="#FF3232" shape-rendering="geometricPrecision"/><rect x="77.48" y="646.0" width="2.96" height="6.5" fill="#FF3232" shape-rendering="geometricPrecision"/><text x="9" y="666" font-size="9.5" fill="#000" textLength="71" lengthAdjust="spacingAndGlyphs">Dr-Jordan-Design</text><text x="157" y="74" text-anchor="middle" font-size="16" font-weight="bold" fill="#FFFF00" stroke="#000" stroke-width="2.1" paint-order="stroke">?</text><text x="235.5" y="73" font-size="14" font-weight="bold" fill="#0000FF" textLength="10" lengthAdjust="spacingAndGlyphs" shape-rendering="geometricPrecision">R</text><text x="264" y="71" font-size="10" font-weight="bold" fill="#000" textLength="19" lengthAdjust="spacingAndGlyphs" stroke="#000" stroke-width="0.5" shape-rendering="geometricPrecision">LOG</text><text x="347" y="72" font-size="11" font-weight="bold" fill="#000" textLength="18.3" lengthAdjust="spacingAndGlyphs" stroke="#000" stroke-width="0.3" shape-rendering="geometricPrecision">FFT</text><text x="398" y="73.5" font-size="11.5" font-weight="bold" fill="#000" textLength="19" lengthAdjust="spacingAndGlyphs" stroke="#000" stroke-width="0.4" shape-rendering="geometricPrecision">MLS</text><text x="447.5" y="76" font-size="22.5" font-weight="normal" fill="#000" textLength="18" lengthAdjust="spacingAndGlyphs" stroke="#000" stroke-width="0.3" shape-rendering="geometricPrecision">Ω</text><text x="505.5" y="73" font-size="14" font-weight="bold" fill="#000" textLength="16" lengthAdjust="spacingAndGlyphs" stroke="#000" stroke-width="0.1" shape-rendering="geometricPrecision">Sg</text><text x="530" y="73" font-size="14" font-weight="bold" fill="#000" textLength="17.5" lengthAdjust="spacingAndGlyphs" stroke="#000" stroke-width="0.1" shape-rendering="geometricPrecision">3D</text><text x="563" y="73" font-size="14.5" font-weight="bold" fill="#000" textLength="19" lengthAdjust="spacingAndGlyphs" stroke="#000" stroke-width="0.3" shape-rendering="geometricPrecision">THD</text><text x="588.3" y="73" font-size="14.5" font-weight="bold" fill="#000" textLength="18" lengthAdjust="spacingAndGlyphs" stroke="#000" stroke-width="0.3" shape-rendering="geometricPrecision">IMD</text><text x="626" y="73" font-size="14" font-weight="bold" fill="#0000FF" textLength="8" lengthAdjust="spacingAndGlyphs" shape-rendering="geometricPrecision">0</text><text x="645.7" y="72" font-size="12" font-weight="bold" fill="#000" textLength="18.8" lengthAdjust="spacingAndGlyphs" stroke="#000" stroke-width="0.2" shape-rendering="geometricPrecision">MAX</text><text x="671" y="72" font-size="11.5" font-weight="bold" fill="#000" textLength="18.5" lengthAdjust="spacingAndGlyphs" stroke="#000" stroke-width="0.3" shape-rendering="geometricPrecision">AVG</text><text x="15.5" y="103.6" font-size="15.5" font-weight="normal" fill="#000" textLength="14" lengthAdjust="spacingAndGlyphs" stroke="#000" stroke-width="0.4" shape-rendering="geometricPrecision">IR</text><text x="42" y="104" font-size="11" font-weight="bold" fill="#000" textLength="18.5" lengthAdjust="spacingAndGlyphs" stroke="#000" stroke-width="0.2" shape-rendering="geometricPrecision">STP</text><text x="70.5" y="103.6" font-size="15.5" font-weight="normal" fill="#000" textLength="17" lengthAdjust="spacingAndGlyphs" stroke="#000" stroke-width="0.5" shape-rendering="geometricPrecision">FR</text><text x="96.7" y="103.6" font-size="15.5" font-weight="normal" fill="#000" textLength="18.7" lengthAdjust="spacingAndGlyphs" stroke="#000" stroke-width="0.5" shape-rendering="geometricPrecision">GD</text><text x="123.5" y="103.6" font-size="15.5" font-weight="normal" fill="#000" textLength="19" lengthAdjust="spacingAndGlyphs" stroke="#000" stroke-width="0.5" shape-rendering="geometricPrecision">PR</text><text x="150" y="104" font-size="10.5" font-weight="bold" fill="#000" textLength="19.5" lengthAdjust="spacingAndGlyphs" stroke="#000" stroke-width="0.2" shape-rendering="geometricPrecision">ETC</text><text x="177.5" y="103.6" font-size="15.5" font-weight="normal" fill="#000" textLength="18" lengthAdjust="spacingAndGlyphs" stroke="#000" stroke-width="0.5" shape-rendering="geometricPrecision">RT</text><text x="204" y="104" font-size="10.5" font-weight="bold" fill="#000" textLength="20" lengthAdjust="spacingAndGlyphs" stroke="#000" stroke-width="0.2" shape-rendering="geometricPrecision">EDC</text><rect x="1097" y="19" width="7" height="3" fill="#fff"/><rect x="1120.5" y="12.5" width="10" height="9" fill="none" stroke="#fff" stroke-width="1"/><rect x="1120" y="11" width="11" height="3" fill="#fff"/><path d="M1143.7 11.7 L1153.3 21.3 M1153.3 11.7 L1143.7 21.3" stroke="#fff" stroke-width="2.2" fill="none" shape-rendering="geometricPrecision"/><rect x="1112" y="41" width="6" height="2" fill="#4A4A46"/><rect x="1129.5" y="38.5" width="6" height="4" fill="none" stroke="#4A4A46"/><rect x="1129" y="38" width="7" height="2" fill="#4A4A46"/><path d="M1131.5 37 V34.5 H1137.5 V39.5 H1136" fill="none" stroke="#4A4A46"/><rect x="1131" y="34" width="7" height="2" fill="#4A4A46"/><path d="M1148.5 36 L1155 42.5 M1155 36 L1148.5 42.5" stroke="#4A4A46" stroke-width="2" fill="none" shape-rendering="geometricPrecision"/><path d="M1146.5 688.5 L1158.5 676.5" stroke="#fff" stroke-width="1.4" shape-rendering="geometricPrecision"/><path d="M1148 688.7 L1158.7 678" stroke="#A09D8C" stroke-width="1.7" shape-rendering="geometricPrecision"/><path d="M1150.5 688.5 L1158.5 680.5" stroke="#fff" stroke-width="1.4" shape-rendering="geometricPrecision"/><path d="M1152 688.7 L1158.7 682" stroke="#A09D8C" stroke-width="1.7" shape-rendering="geometricPrecision"/><path d="M1154.5 688.5 L1158.5 684.5" stroke="#fff" stroke-width="1.4" shape-rendering="geometricPrecision"/><path d="M1156 688.7 L1158.7 686" stroke="#A09D8C" stroke-width="1.7" shape-rendering="geometricPrecision"/></svg>
<div class="abs" style="left:7px;top:674px;font-size:11px;line-height:14px">Ready</div>
<div class="pane" style="left:873px;width:41px;text-align:left;padding-left:2px">44100</div>
<div class="pane" style="left:917px;width:59px;text-align:center;padding-left:0px">65536</div>
<div class="pane" style="left:979px;width:41px;text-align:left;padding-left:2px">1.49s</div>
<div class="pane" style="left:1023px;width:26px;text-align:left;padding-left:2px"></div>
<div class="pane" style="left:1052px;width:88px;text-align:left;padding-left:1px;letter-spacing:-0.3px">Hamming</div>
</body></html>
